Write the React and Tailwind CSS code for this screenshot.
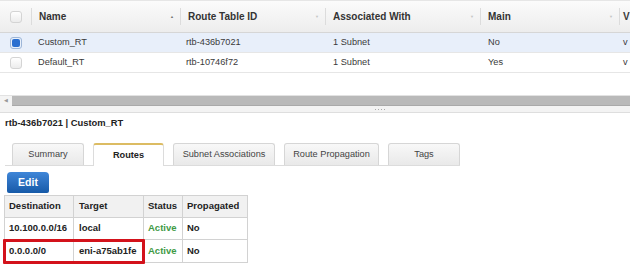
import React from 'react'

const cols = [
  { label: 'Name', w: 'w-[149px]', arrow: '▲', dark: true },
  { label: 'Route Table ID', w: 'w-[145px]', arrow: '▼' },
  { label: 'Associated With', w: 'w-[155px]', arrow: '▼' },
  { label: 'Main', w: 'w-[139px]', arrow: '▼' },
]

const rows = [
  { name: 'Custom_RT', id: 'rtb-436b7021', assoc: '1 Subnet', main: 'No', selected: true },
  { name: 'Default_RT', id: 'rtb-10746f72', assoc: '1 Subnet', main: 'Yes' },
]

const tabs = [
  { label: 'Summary', w: 'w-[72px]' },
  { label: 'Routes', w: 'w-[71px]', active: true },
  { label: 'Subnet Associations', w: 'w-[102px]' },
  { label: 'Route Propagation', w: 'w-[95px]' },
  { label: 'Tags', w: 'w-[72px]' },
]

const routes = [
  { dest: '10.100.0.0/16', target: 'local', status: 'Active', prop: 'No' },
  { dest: '0.0.0.0/0', target: 'eni-a75ab1fe', status: 'Active', prop: 'No' },
]

function Check({ on }) {
  return (
    <div className={`w-[12px] h-[12px] rounded-[3px] border ${on ? 'border-[#9db6d8] bg-[#e9f0fa] p-[1px]' : 'border-[#d4d4d4] bg-gradient-to-b from-white to-[#ececec]'}`}>
      {on && <div className="w-full h-full rounded-[2px] bg-[#2a6fd0]" />}
    </div>
  )
}

export default function App() {
  return (
    <div className="w-[630px] h-[273px] overflow-hidden bg-white text-[#3a3a3a]" style={{ fontFamily: '"Liberation Sans", Arial, sans-serif' }}>
      {/* Grid header */}
      <div className="flex h-[33px] border-b border-[#d6d6d6] bg-gradient-to-b from-[#fbfbfb] to-[#ededed] border-t border-t-[#e6e6e6]">
        <div className="w-[31px] flex items-center pl-[10px]">
          <Check />
        </div>
        {cols.map(c => (
          <div key={c.label} className={`${c.w} shrink-0 flex items-center border-l border-[#dcdcdc] my-[7px] pl-[7px] pr-[6px]`}>
            <span className="flex-1 text-[10px] font-bold text-[#333]">{c.label}</span>
            <span className={`text-[4px] ${c.dark ? 'text-[#777]' : 'text-[#c4c4c4]'}`}>{c.arrow}</span>
          </div>
        ))}
        <div className="flex-1 flex items-center border-l border-[#dcdcdc] my-[7px] pl-[3px]">
          <span className="text-[10px] font-bold">V</span>
        </div>
      </div>

      {/* Grid rows */}
      {rows.map(r => (
        <div key={r.id} className={`flex h-[20px] items-center border-b border-[#e6e6e6] text-[9.2px] ${r.selected ? 'bg-[#e8effa]' : 'bg-white'}`}>
          <div className="w-[31px] pl-[10px]"><Check on={r.selected} /></div>
          <div className="w-[149px] pl-[7px]">{r.name}</div>
          <div className="w-[145px] pl-[6px]">{r.id}</div>
          <div className="w-[155px] pl-[8px]">{r.assoc}</div>
          <div className="w-[139px] pl-[8px]">{r.main}</div>
          <div className="flex-1 pl-[4px]">v</div>
        </div>
      ))}

      <div className="h-[22px]" />

      {/* Horizontal scrollbar */}
      <div className="flex h-[11px] border-t border-[#e2e2e2]">
        <div className="w-[12px] flex items-center justify-center bg-[#f4f4f4] text-[5px] text-[#999]">◀</div>
        <div className="flex-1 bg-[#b9b9b9] border-b border-[#a9a9a9]" />
      </div>

      {/* Splitter */}
      <div className="h-[7px] flex items-center justify-center bg-[#f3f3f3] border-b border-[#dedede]">
        <div className="flex gap-[2px] ml-[130px]">
          {[0, 1, 2, 3].map(i => <span key={i} className="w-[1px] h-[1px] bg-[#aaa]" />)}
        </div>
      </div>

      {/* Detail title */}
      <div className="h-[30px] pl-[5px] pt-[3px]">
        <div className="text-[9.4px] font-bold leading-[14px] text-[#222]">rtb-436b7021 | Custom_RT</div>
      </div>

      {/* Tabs */}
      <div className="flex items-end h-[23px] w-[455px] ml-[5px] pl-[7px] gap-[9px] border-b border-[#dcdcdc]">
        {tabs.map(t => (
          <div
            key={t.label}
            className={`${t.w} shrink-0 flex items-center justify-center rounded-t-[3px] text-[9.2px] ${
              t.active
                ? 'h-[23px] -mb-[1px] bg-white border border-b-0 border-[#dcdcdc] border-t-2 border-t-[#dcbc63] font-bold text-[#222]'
                : 'h-[22px] bg-gradient-to-b from-[#f8f8f8] to-[#e9e9e9] border border-b-0 border-[#d6d6d6] text-[#444]'
            }`}
          >
            {t.label}
          </div>
        ))}
      </div>

      {/* Edit button */}
      <div className="pl-[7px] pt-[6px]">
        <div className="w-[42px] h-[21px] flex items-center justify-center rounded-t-[4px] rounded-b-[2px] bg-gradient-to-b from-[#3f86d8] to-[#165aa8] text-white text-[10.5px] font-bold">
          Edit
        </div>
      </div>

      {/* Routes table */}
      <div className="relative ml-[4px] mt-[2px] w-[244px]">
        <div className="border border-[#d2d2d2] text-[9.5px] font-bold text-[#222]">
          <div className="flex h-[22px] items-center bg-[#f1f1f1] border-b border-[#d2d2d2]">
            <div className="w-[69px] h-full flex items-center pl-[4px] border-r border-[#d2d2d2]">Destination</div>
            <div className="w-[70px] h-full flex items-center pl-[5px] border-r border-[#d2d2d2]">Target</div>
            <div className="w-[39px] h-full flex items-center pl-[4px] border-r border-[#d2d2d2]">Status</div>
            <div className="flex-1 h-full flex items-center pl-[4px]">Propagated</div>
          </div>
          {routes.map((r, i) => (
            <div key={r.dest} className={`flex h-[22px] items-center ${i === 0 ? 'border-b border-[#d2d2d2]' : ''}`}>
              <div className="w-[69px] h-full flex items-center pl-[4px] border-r border-[#d2d2d2]">{r.dest}</div>
              <div className="w-[70px] h-full flex items-center pl-[5px] border-r border-[#d2d2d2]">{r.target}</div>
              <div className="w-[39px] h-full flex items-center pl-[4px] border-r border-[#d2d2d2] text-[#3f9a45]">{r.status}</div>
              <div className="flex-1 h-full flex items-center pl-[4px]">{r.prop}</div>
            </div>
          ))}
        </div>
        {/* highlight annotation */}
        <div className="absolute left-[-1px] top-[44px] w-[142px] h-[25px] border-[3px] border-[#d3121b] rounded-[1px]" />
      </div>
    </div>
  )
}
